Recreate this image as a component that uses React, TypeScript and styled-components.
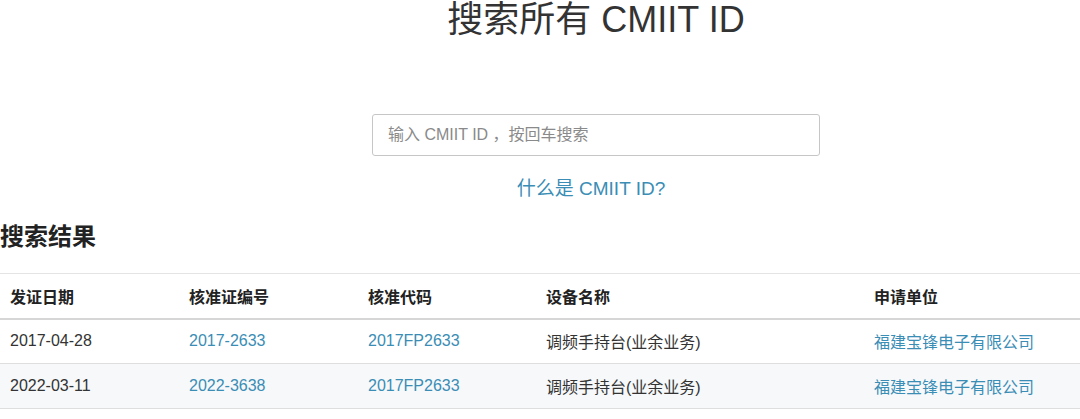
import React from "react";
import styled, { createGlobalStyle } from "styled-components";

const FONT = `"Liberation Sans", "Noto Sans CJK SC", sans-serif`;

const Global = createGlobalStyle`
  html, body { margin: 0; padding: 0; background: #fff; }
  body {
    font-family: ${FONT};
    color: #333;
  }
`;

const Page = styled.div`
  width: 1080px;
  height: 419px;
  overflow: hidden;
  display: flex;
  flex-direction: column;
`;

const Hero = styled.section`
  display: flex;
  flex-direction: column;
  align-items: center;
  padding-left: 112px;
`;

const Title = styled.h1`
  margin: 0;
  font-size: 36px;
  font-weight: 400;
  line-height: 40px;
  color: #333;
`;

const SearchInput = styled.input`
  box-sizing: border-box;
  margin-top: 74px;
  width: 448px;
  height: 42px;
  padding: 0 15px;
  border: 1px solid #c6c6c6;
  border-radius: 3px;
  font-family: ${FONT};
  font-size: 16px;
  color: #333;
  outline: none;
  &::placeholder { color: #8a8a8a; }
`;

const HelpLink = styled.a`
  margin-top: 19px;
  margin-left: -10px;
  font-size: 19px;
  line-height: 28px;
  color: #3a8db5;
  text-decoration: none;
`;

const SectionTitle = styled.h2`
  margin: 19px 0 0;
  font-size: 24px;
  font-weight: 700;
  line-height: 30px;
  color: #222;
`;

const Table = styled.table`
  margin-top: 21px;
  width: 1080px;
  border-collapse: collapse;
  table-layout: fixed;
  font-size: 16px;
`;

const HeadCell = styled.th<{ $w?: number }>`
  box-sizing: border-box;
  text-align: left;
  font-weight: 700;
  color: #222;
  height: 45px;
  padding: 0 10px;
  border-top: 1px solid #e4e4e4;
  border-bottom: 2px solid #d6d6d6;
  width: ${(p) => (p.$w ? `${p.$w}px` : "auto")};
`;

const Row = styled.tr<{ $alt?: boolean }>`
  background: ${(p) => (p.$alt ? "#f6f8fa" : "#fff")};
`;

const Cell = styled.td<{ $link?: boolean }>`
  box-sizing: border-box;
  height: 45px;
  padding: 0 10px;
  border-bottom: 1px solid #dedede;
  color: ${(p) => (p.$link ? "#3a8db5" : "#333")};
  white-space: nowrap;
`;

const rows = [
  { date: "2017-04-28", no: "2017-2633", code: "2017FP2633", name: "调频手持台(业余业务)", org: "福建宝锋电子有限公司" },
  { date: "2022-03-11", no: "2022-3638", code: "2017FP2633", name: "调频手持台(业余业务)", org: "福建宝锋电子有限公司" },
];

export default function App() {
  return (
    <Page>
      <Global />
      <Hero>
        <Title>搜索所有 CMIIT ID</Title>
        <SearchInput placeholder="输入 CMIIT ID ，按回车搜索" />
        <HelpLink href="#">什么是 CMIIT ID?</HelpLink>
      </Hero>
      <SectionTitle>搜索结果</SectionTitle>
      <Table>
        <thead>
          <tr>
            <HeadCell $w={179}>发证日期</HeadCell>
            <HeadCell $w={179}>核准证编号</HeadCell>
            <HeadCell $w={178}>核准代码</HeadCell>
            <HeadCell $w={328}>设备名称</HeadCell>
            <HeadCell>申请单位</HeadCell>
          </tr>
        </thead>
        <tbody>
          {rows.map((r, i) => (
            <Row key={i} $alt={i % 2 === 1}>
              <Cell>{r.date}</Cell>
              <Cell $link>{r.no}</Cell>
              <Cell $link>{r.code}</Cell>
              <Cell>{r.name}</Cell>
              <Cell $link>{r.org}</Cell>
            </Row>
          ))}
        </tbody>
      </Table>
    </Page>
  );
}
